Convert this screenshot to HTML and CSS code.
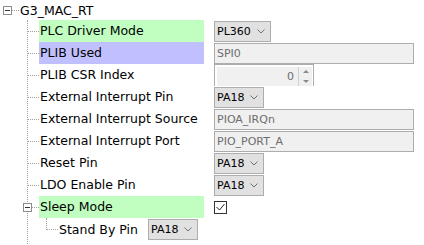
FILE: index.html
```html
<!DOCTYPE html>
<html lang="en">
<head>
  <meta charset="UTF-8" />
  <title>G3_MAC_RT</title>
  <link rel="stylesheet" href="styles.css">
</head>
<body>
  <div class="tree">
    <div class="root">
      <span class="expander"></span>
      <span class="stub"></span>
      <span class="root-label">G3_MAC_RT</span>
    </div>

    <ul class="children">
      <li class="row">
        <span class="hline"></span>
        <span class="label green">PLC Driver Mode</span>
        <span class="combo">PL360 <svg class="chev" width="8" height="5" viewBox="0 0 8 5"><polyline points="0.5,0.5 4,4 7.5,0.5" /></svg></span>
      </li>
      <li class="row">
        <span class="hline"></span>
        <span class="label blue">PLIB Used</span>
        <span class="field wide">SPI0</span>
      </li>
      <li class="row">
        <span class="hline"></span>
        <span class="label">PLIB CSR Index</span>
        <span class="spin">
          <span class="spin-val">0</span>
          <span class="spin-btns">
            <span class="up"></span>
            <span class="down"></span>
          </span>
        </span>
      </li>
      <li class="row">
        <span class="hline"></span>
        <span class="label">External Interrupt Pin</span>
        <span class="combo">PA18 <svg class="chev" width="8" height="5" viewBox="0 0 8 5"><polyline points="0.5,0.5 4,4 7.5,0.5" /></svg></span>
      </li>
      <li class="row">
        <span class="hline"></span>
        <span class="label">External Interrupt Source</span>
        <span class="field wide">PIOA_IRQn</span>
      </li>
      <li class="row">
        <span class="hline"></span>
        <span class="label">External Interrupt Port</span>
        <span class="field wide">PIO_PORT_A</span>
      </li>
      <li class="row">
        <span class="hline"></span>
        <span class="label">Reset Pin</span>
        <span class="combo">PA18 <svg class="chev" width="8" height="5" viewBox="0 0 8 5"><polyline points="0.5,0.5 4,4 7.5,0.5" /></svg></span>
      </li>
      <li class="row">
        <span class="hline"></span>
        <span class="label">LDO Enable Pin</span>
        <span class="combo">PA18 <svg class="chev" width="8" height="5" viewBox="0 0 8 5"><polyline points="0.5,0.5 4,4 7.5,0.5" /></svg></span>
      </li>
      <li class="row">
        <span class="expander small"></span>
        <span class="hline"></span>
        <span class="label green">Sleep Mode</span>
        <span class="check"><svg width="11" height="11" viewBox="0 0 11 11"><polyline points="1.5,5 4.5,8 9.5,2" /></svg></span>
      </li>
      <li class="row sub">
        <span class="elbow"></span>
        <span class="sub-label">Stand By Pin</span>
        <span class="combo">PA18 <svg class="chev" width="8" height="5" viewBox="0 0 8 5"><polyline points="0.5,0.5 4,4 7.5,0.5" /></svg></span>
      </li>
    </ul>
  </div>
</body>
</html>
```

FILE: styles.css
```css
body { margin: 0; background: #fff; color: #000; font-family: "DejaVu Sans", Verdana, sans-serif; font-size: 12.5px; }

.tree { width: 424px; height: 245px; overflow: hidden; }

/* root node */
.root { display: flex; align-items: center; height: 20px; position: relative; }
.root .expander { margin-left: 3px; }
.stub { width: 7px; border-top: 1px dotted #a0a0a0; }
.root-label { padding-left: 1px; }

.expander {
  box-sizing: border-box;
  width: 9px;
  height: 9px;
  border: 1px solid #8c8c8c;
  background: #fff;
  position: relative;
}
.expander::after {
  content: "";
  position: absolute;
  left: 1px;
  top: 3px;
  width: 5px;
  height: 1px;
  background: #333;
}

/* children */
.children {
  list-style: none;
  margin: 0 0 0 27px;
  padding: 0 0 20px 0;
  border-left: 1px dotted #a0a0a0;
}
.row { display: flex; align-items: center; height: 22px; position: relative; }
.hline { width: 11px; border-top: 1px dotted #a0a0a0; }
.label { width: 164px; height: 22px; line-height: 22px; padding-left: 1px; margin-right: 10px; white-space: nowrap; }
.label.green { background: #c0ffc0; }
.label.blue { background: #c0c0ff; }

.expander.small { position: absolute; left: -5px; top: 7px; }

/* controls */
.combo {
  box-sizing: border-box;
  height: 21px;
  display: inline-flex;
  align-items: center;
  gap: 6px;
  padding: 0 5px 0 2px;
  border: 1px solid #adadad;
  background: #e1e1e1;
  font-size: 11px;
}
.chev { fill: none; stroke: #707070; stroke-width: 1; }

.field {
  box-sizing: border-box;
  height: 21px;
  line-height: 19px;
  padding-left: 2px;
  border: 1px solid #adadad;
  background: #f0f0f0;
  color: #6d6d6d;
  font-size: 11px;
}
.field.wide { width: 200px; }

.spin {
  box-sizing: border-box;
  display: flex;
  width: 100px;
  height: 22px;
  padding: 2px 1px 0 2px;
  border: 1px solid #adadad;
  border-bottom: none;
  background: #fff;
  font-size: 11px;
}
.spin-val { flex: 1; text-align: right; padding-right: 4px; line-height: 20px; background: #f0f0f0; color: #6d6d6d; }
.spin-btns { width: 13px; display: flex; flex-direction: column; border-left: 1px solid #d0d0d0; background: #f0f0f0; }
.spin-btns span { flex: 1; display: flex; align-items: center; justify-content: center; }
.up::after { content: ""; border: 3px solid transparent; border-bottom: 3px solid #8a8a8a; border-top: none; }
.down::after { content: ""; border: 3px solid transparent; border-top: 3px solid #8a8a8a; border-bottom: none; }

.check {
  box-sizing: border-box;
  width: 13px;
  height: 13px;
  border: 1px solid #333;
  background: #fff;
}
.check svg { display: block; fill: none; stroke: #222; stroke-width: 1; }

/* nested child */
.sub .elbow {
  align-self: flex-start;
  width: 11px;
  height: 11px;
  margin-left: 18px;
  border-left: 1px dotted #a0a0a0;
  border-bottom: 1px dotted #a0a0a0;
}
.sub-label { width: 89px; padding-left: 1px; white-space: nowrap; }
```
